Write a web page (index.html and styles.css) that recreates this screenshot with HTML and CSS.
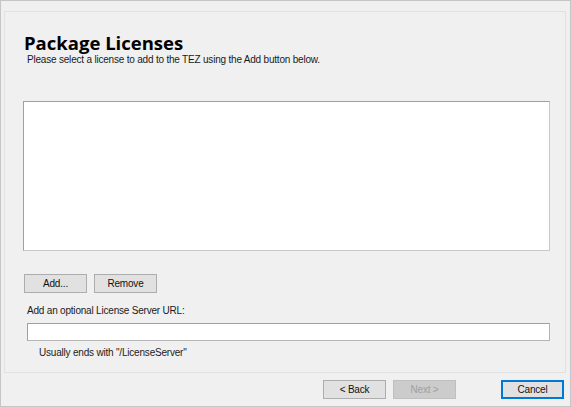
FILE: index.html
```html
<!DOCTYPE html>
<html>
<head>
<meta charset="utf-8">
<link rel="stylesheet" href="styles.css">
</head>
<body>
<div class="window">
  <div class="panel">
    <div class="header">
      <h1 class="title">Package Licenses</h1>
      <p class="subtitle">Please select a license to add to the TEZ using the Add button below.</p>
    </div>
    <div class="listbox"></div>
    <div class="btn-row">
      <button class="btn">Add...</button>
      <button class="btn">Remove</button>
    </div>
    <label class="label">Add an optional License Server URL:</label>
    <div class="textbox"></div>
    <p class="hint">Usually ends with "/LicenseServer"</p>
  </div>
  <div class="footer">
    <button class="btn">&lt; Back</button>
    <button class="btn disabled">Next &gt;</button>
    <button class="btn default">Cancel</button>
  </div>
</div>
</body>
</html>
```
FILE: styles.css
```css
html, body {
  margin: 0;
  padding: 0;
  background: #f0f0f0;
}
body {
  font-family: "Liberation Sans", Arial, sans-serif;
  font-size: 10px;
  color: #1a1a1a;
}
.window {
  box-sizing: border-box;
  width: 571px;
  height: 407px;
  border: 1px solid #c6c6c6;
  background: #f0f0f0;
  display: flex;
  flex-direction: column;
}
.panel {
  box-sizing: border-box;
  margin: 10px 4px 0 3px;
  height: 362px;
  border: 1px solid #e2e2e2;
  display: flex;
  flex-direction: column;
  padding-left: 18px;
}
.header {
  padding-top: 20px;
}
.title {
  margin: 0;
  font-family: "Open Sans", sans-serif;
  font-weight: 700;
  font-size: 18.5px;
  line-height: 22px;
  color: #000;
  padding-left: 1px;
}
.subtitle {
  margin: 0;
  padding-left: 4px;
  line-height: 12px;
  letter-spacing: -0.2px;
}
.listbox {
  box-sizing: border-box;
  margin-top: 35px;
  width: 527px;
  height: 150px;
  background: #fff;
  border: 1px solid #a0a0a0;
  border-right-color: #c8c8c8;
  border-bottom-color: #c8c8c8;
}
.btn-row {
  display: flex;
  gap: 7px;
  margin-top: 23px;
  padding-left: 1px;
}
.btn {
  box-sizing: border-box;
  width: 63px;
  height: 19px;
  padding: 0;
  margin: 0;
  border: 1px solid #adadad;
  background: #e1e1e1;
  font-family: "Liberation Sans", Arial, sans-serif;
  font-size: 10px;
  color: #111;
  letter-spacing: -0.2px;
}
.label {
  margin-top: 12px;
  padding-left: 4px;
  line-height: 12px;
  letter-spacing: -0.2px;
}
.textbox {
  box-sizing: border-box;
  margin-top: 6px;
  margin-left: 4px;
  width: 523px;
  height: 18px;
  background: #fff;
  border: 1px solid #7a7a7a;
  border-color: #a0a0a0 #b5b5b5 #b5b5b5 #a0a0a0;
}
.hint {
  margin: 6px 0 0 16px;
  line-height: 12px;
  letter-spacing: -0.2px;
  color: #222;
}
.footer {
  display: flex;
  padding: 7px 0 0 322px;
}
.footer .btn:nth-child(2) {
  margin-left: 7px;
}
.footer .btn.default {
  margin-left: 45px;
  border: 2px solid #0078d7;
}
.btn.disabled {
  background: #cccccc;
  border-color: #bfbfbf;
  color: #a0a0a0;
}
```
